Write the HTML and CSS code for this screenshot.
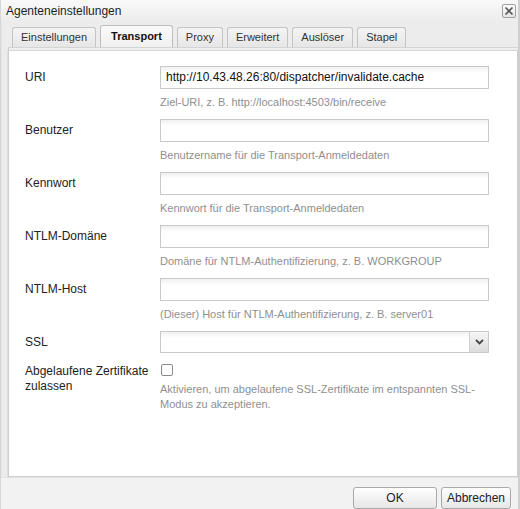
FILE: index.html
```html
<!DOCTYPE html>
<html lang="de">
<head>
<meta charset="utf-8">
<title>Agenteneinstellungen</title>
<link rel="stylesheet" href="styles.css">
</head>
<body>
<div class="window">
  <div class="titlebar">
    <span class="title">Agenteneinstellungen</span>
    <span class="close" aria-label="Schließen">
      <svg width="10" height="10" viewBox="0 0 10 10"><path d="M1.5 1.5 L8.5 8.5 M8.5 1.5 L1.5 8.5" stroke="#555" stroke-width="1.6" fill="none"/></svg>
    </span>
  </div>
  <div class="body">
    <div class="tabbar">
      <div class="tab">Einstellungen</div>
      <div class="tab active">Transport</div>
      <div class="tab">Proxy</div>
      <div class="tab">Erweitert</div>
      <div class="tab">Auslöser</div>
      <div class="tab">Stapel</div>
    </div>
    <div class="strip"></div>
    <div class="panel">
      <div class="row">
        <div class="label">URI</div>
        <div class="field">
          <div class="input">http://10.43.48.26:80/dispatcher/invalidate.cache</div>
          <div class="hint">Ziel-URI, z. B. http://localhost:4503/bin/receive</div>
        </div>
      </div>
      <div class="row">
        <div class="label">Benutzer</div>
        <div class="field">
          <div class="input"></div>
          <div class="hint">Benutzername für die Transport-Anmeldedaten</div>
        </div>
      </div>
      <div class="row">
        <div class="label">Kennwort</div>
        <div class="field">
          <div class="input"></div>
          <div class="hint">Kennwort für die Transport-Anmeldedaten</div>
        </div>
      </div>
      <div class="row">
        <div class="label">NTLM-Domäne</div>
        <div class="field">
          <div class="input"></div>
          <div class="hint">Domäne für NTLM-Authentifizierung, z. B. WORKGROUP</div>
        </div>
      </div>
      <div class="row">
        <div class="label">NTLM-Host</div>
        <div class="field">
          <div class="input"></div>
          <div class="hint">(Dieser) Host für NTLM-Authentifizierung, z. B. server01</div>
        </div>
      </div>
      <div class="row">
        <div class="label label-select">SSL</div>
        <div class="field">
          <div class="select">
            <div class="select-value"></div>
            <div class="select-btn">
              <svg width="9" height="6" viewBox="0 0 9 6"><path d="M1 1 L4.5 4.5 L8 1" stroke="#444" stroke-width="1.8" fill="none"/></svg>
            </div>
          </div>
        </div>
      </div>
      <div class="row">
        <div class="label label-multi">Abgelaufene Zertifikate zulassen</div>
        <div class="field">
          <div class="checkbox"></div>
          <div class="hint hint-multi">Aktivieren, um abgelaufene SSL-Zertifikate im entspannten SSL-Modus zu akzeptieren.</div>
        </div>
      </div>
    </div>
  </div>
  <div class="footer">
    <button class="btn btn-ok">OK</button>
    <button class="btn btn-cancel">Abbrechen</button>
  </div>
</div>
</body>
</html>
```

FILE: styles.css
```css
* { box-sizing: border-box; }
html, body {
  margin: 0;
  padding: 0;
}
body {
  width: 520px;
  height: 509px;
  overflow: hidden;
  background: #f2f2f2;
  font-family: "Liberation Sans", Arial, sans-serif;
  font-size: 12px;
  color: #222;
}
.window {
  width: 520px;
  height: 509px;
  display: flex;
  flex-direction: column;
  border-left: 1px solid #d6d6d6;
  border-right: 2px solid #cfcfcf;
  background: #f2f2f2;
}
.titlebar {
  height: 22px;
  display: flex;
  align-items: center;
  justify-content: space-between;
  padding: 0 2px 0 5px;
  background: linear-gradient(#f9f9f9, #ececec);
}
.title {
  font-size: 12px;
  color: #1e1e1e;
}
.close {
  width: 14px;
  height: 14px;
  border: 1px solid #a0a0a0;
  border-radius: 2px;
  background: linear-gradient(#fdfdfd, #e4e4e4);
  display: flex;
  align-items: center;
  justify-content: center;
}
.body {
  flex: 1;
  display: flex;
  flex-direction: column;
  padding-left: 6px;
  background: #ececec;
  border-left: 1px solid #e6e6e6;
}
.tabbar {
  display: flex;
  align-items: flex-end;
  gap: 4px;
  height: 25px;
  padding-left: 4px;
}
.tab {
  height: 20px;
  padding: 0 8px;
  font-size: 11px;
  color: #333;
  line-height: 19px;
  border: 1px solid #c4c4c4;
  border-bottom: none;
  border-radius: 3px 3px 0 0;
  background: linear-gradient(#f4f4f4, #e6e6e6);
}
.tab.active {
  height: 22px;
  line-height: 21px;
  padding: 0 10px;
  font-weight: bold;
  color: #111;
  background: linear-gradient(#fafafa, #f0f0f0);
  border-color: #bdbdbd;
}
.strip {
  height: 4px;
  background: #efefef;
  border-top: 1px solid #d4d4d4;
  border-bottom: 1px solid #d6d6d6;
  border-left: 1px solid #d0d0d0;
}
.panel {
  height: 426px;
  background: #fff;
  border: 1px solid #cfcfcf;
  border-top: none;
  box-shadow: -1px 0 0 #dedede;
  padding: 15px 0 0 16px;
}
.row {
  display: flex;
  margin-bottom: 10px;
}
.label {
  width: 135px;
  flex: none;
  line-height: 23px;
  color: #222;
}
.label-select {
  line-height: 22px;
}
.label-multi {
  line-height: 15px;
  padding-top: 1px;
}
.field {
  width: 329px;
  flex: none;
}
.input {
  height: 23px;
  border: 1px solid #c9c9c9;
  background: linear-gradient(#f0f0f0, #ffffff 6px);
  padding-left: 5px;
  line-height: 21px;
  font-size: 12px;
  color: #111;
  white-space: nowrap;
  overflow: hidden;
}
.hint {
  margin-top: 6px;
  font-size: 11px;
  line-height: 14px;
  color: #8f8f8f;
}
.hint-multi {
  margin-top: 6px;
  line-height: 15px;
}
.select {
  height: 22px;
  display: flex;
  border: 1px solid #c9c9c9;
  background: linear-gradient(#f0f0f0, #ffffff 6px);
}
.select-value {
  flex: 1;
}
.select-btn {
  width: 19px;
  border-left: 1px solid #d0d0d0;
  background: linear-gradient(#f6f6f6, #dcdcdc);
  display: flex;
  align-items: center;
  justify-content: center;
}
.checkbox {
  width: 12px;
  height: 12px;
  margin: 1px 0 0 1px;
  border: 1px solid #8a8a8a;
  border-radius: 2px;
  background: #fff;
}
.footer {
  height: 33px;
  display: flex;
  justify-content: flex-end;
  align-items: flex-start;
  gap: 4px;
  padding: 9px 7px 0 0;
  background: #f2f2f2;
  border-top: 1px solid #e2e2e2;
}
.btn {
  height: 22px;
  font-family: "Liberation Sans", Arial, sans-serif;
  font-size: 12px;
  color: #222;
  border: 1px solid #a9a9a9;
  border-radius: 3px;
  background: linear-gradient(#ffffff, #e6e6e6);
  padding: 0;
}
.btn-ok { width: 84px; }
.btn-cancel { width: 70px; }
```
